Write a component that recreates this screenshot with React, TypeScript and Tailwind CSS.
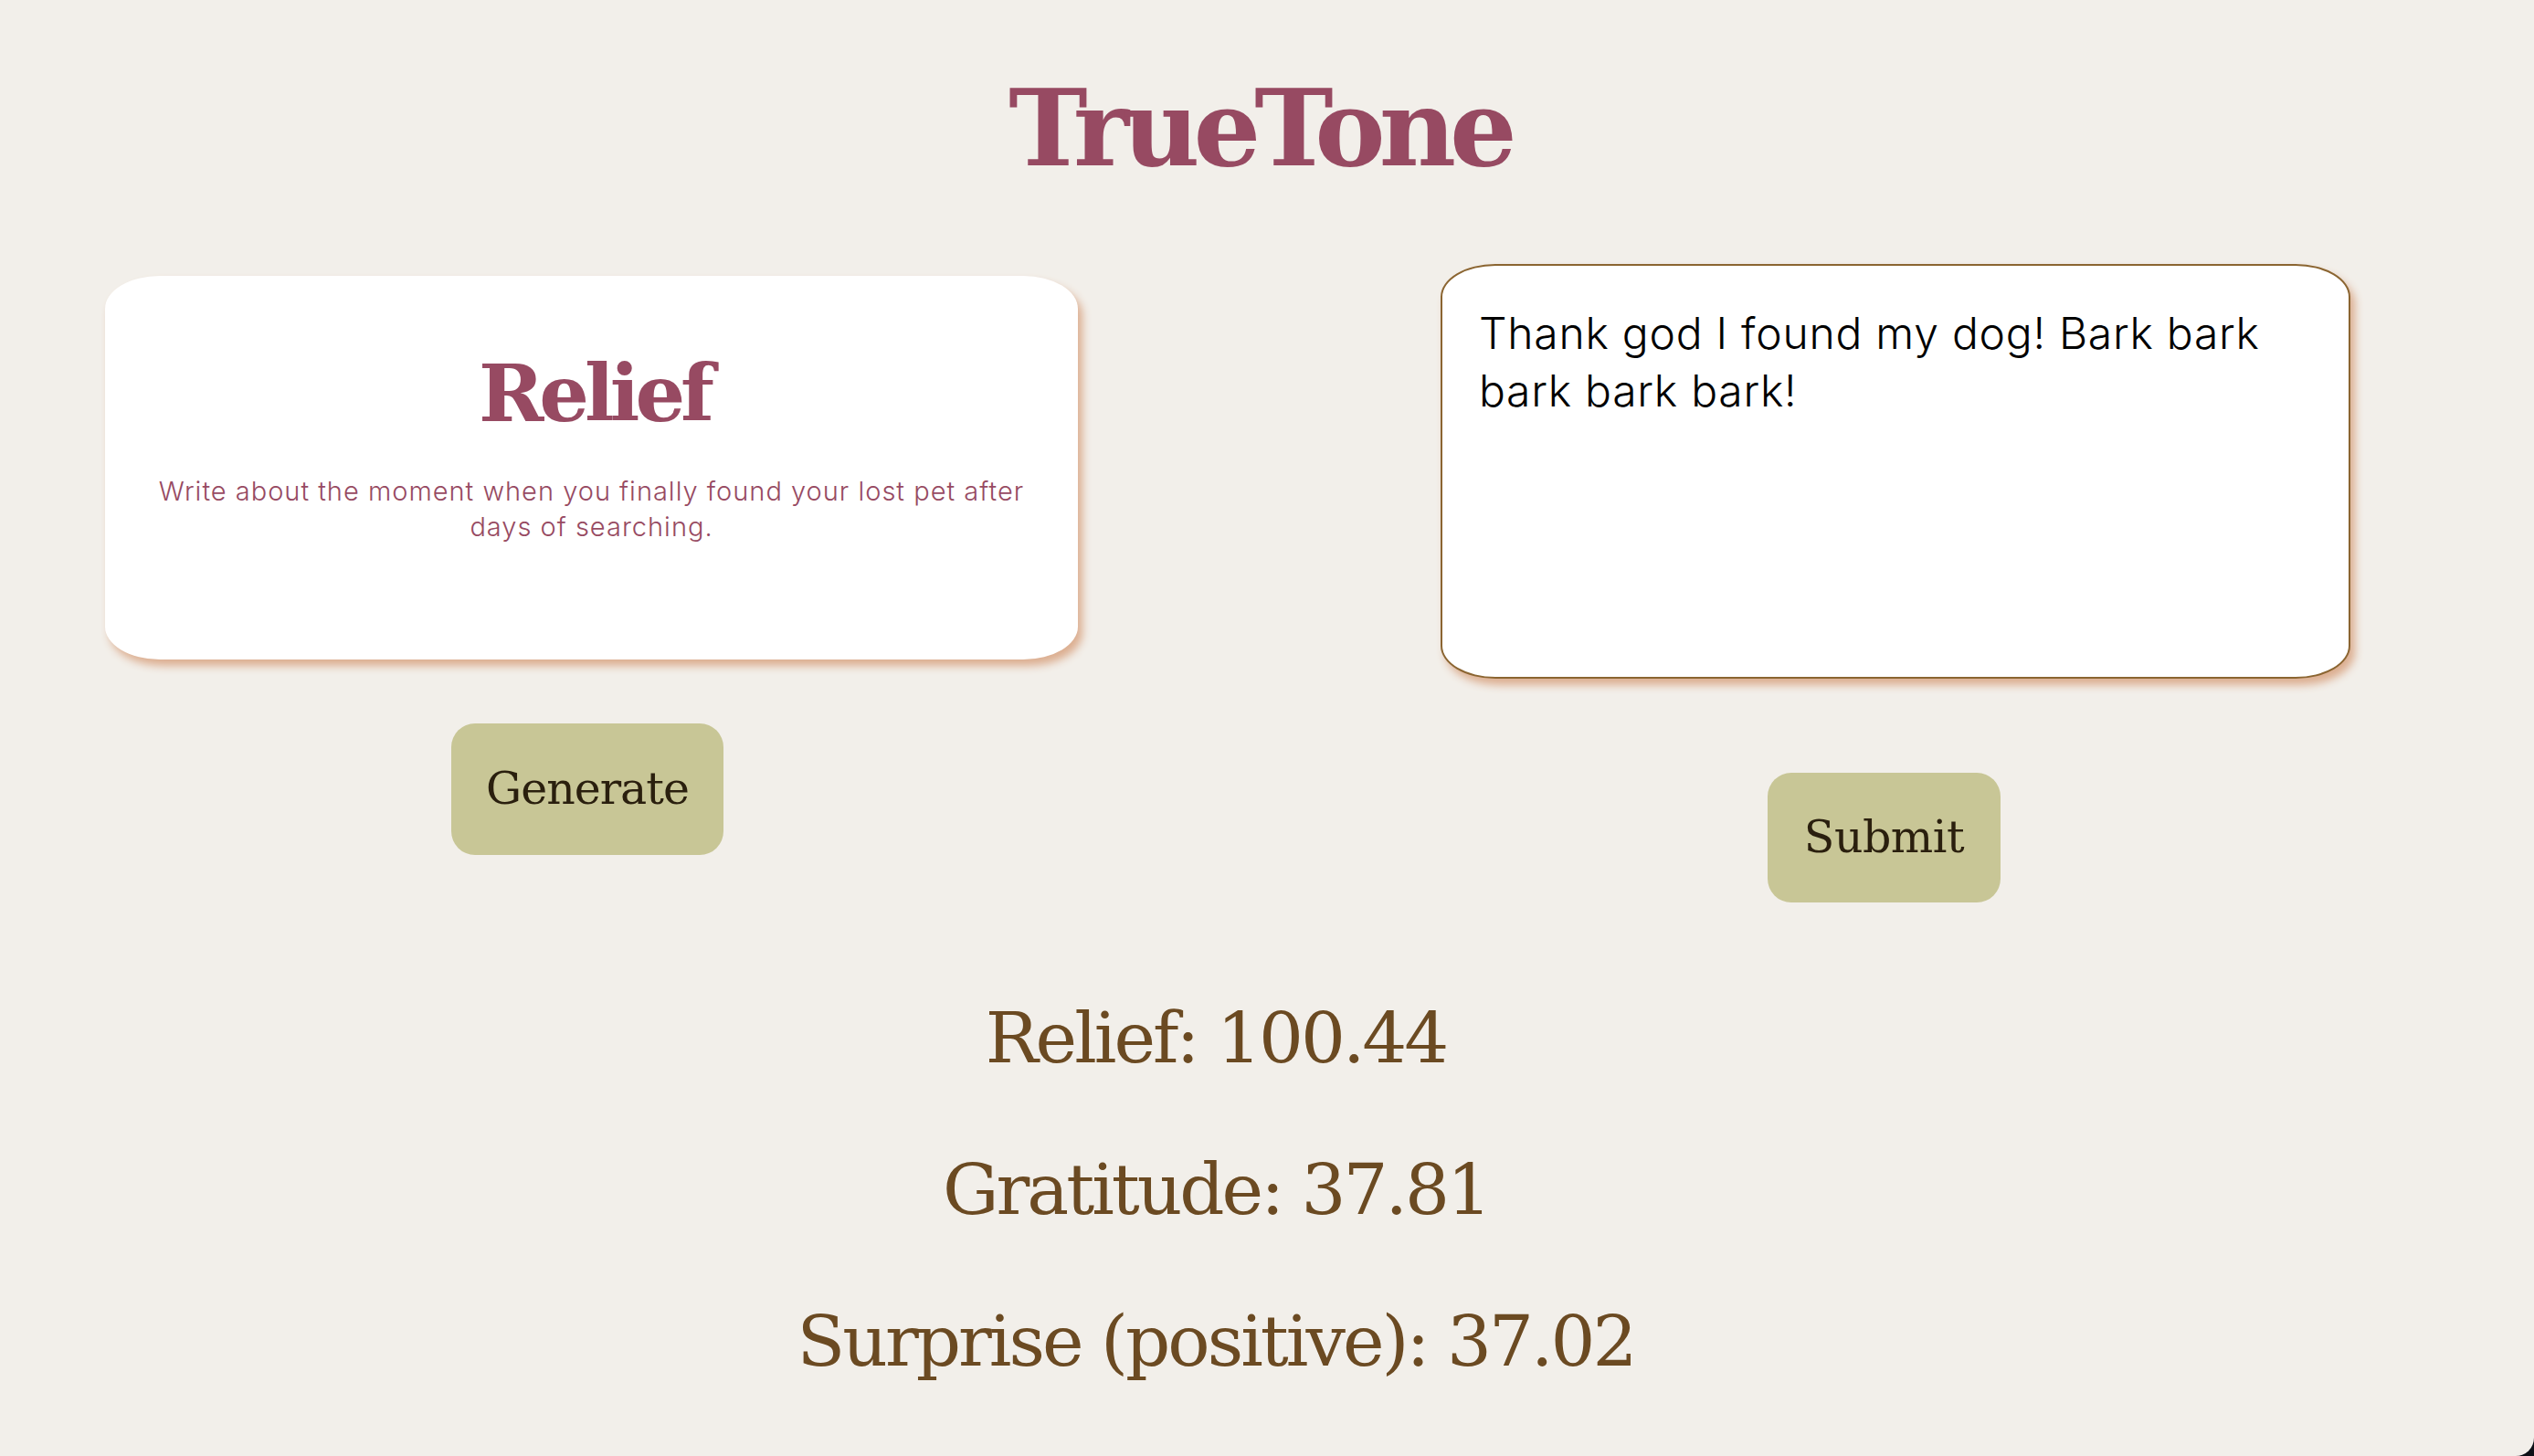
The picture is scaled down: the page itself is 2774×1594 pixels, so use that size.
import { useState } from 'react';

const serif = "font-['DejaVu_Serif',serif]";
const sans = "font-['Inter',sans-serif]";

const results = [
  { label: 'Relief', score: '100.44' },
  { label: 'Gratitude', score: '37.81' },
  { label: 'Surprise (positive)', score: '37.02' },
];

export default function App() {
  const [entry, setEntry] = useState('Thank god I found my dog! Bark bark bark bark bark!');

  return (
    <div className="min-h-screen bg-[#0d1117]">
      <main className="h-[1594px] bg-[#f2efea] rounded-br-[20px] flex flex-col overflow-hidden">
        <h1 className={`${serif} mt-[82px] pr-[16px] text-center text-[116px] leading-none font-bold text-[#974a62] tracking-[-7px]`}>
          TrueTone
        </h1>

        {/* Prompt + entry */}
        <div className="mt-[91px] flex pl-[115px] gap-[397px]">
          <div className="pt-[13px] flex flex-col w-[1065px]">
            <div className="h-[420px] bg-white rounded-[60px/36px] shadow-[5px_7px_10px_#dcae90] pt-[86px] px-[40px] text-center">
              <h2 className={`${serif} pl-[6px] text-[86px] leading-none font-bold text-[#974a62] tracking-[-5px]`}>Relief</h2>
              <p className={`${sans} mt-[44px] text-[29px] leading-[39px] font-light text-[#974a62] tracking-[1px]`}>
                Write about the moment when you finally found your lost pet after days of searching.
              </p>
            </div>
            <button className={`${serif} mt-[70px] ml-[379px] w-[298px] h-[144px] rounded-[26px] bg-[#c8c696] text-[49px] text-[#2a1f0e] tracking-[-1px]`}>
              Generate
            </button>
          </div>

          <div className="flex flex-col w-[996px]">
            <textarea
              value={entry}
              onChange={(e) => setEntry(e.target.value)}
              className={`${sans} h-[454px] w-full resize-none bg-white border-2 border-[#8b6531] rounded-[60px/36px] shadow-[5px_7px_10px_#dcae90] pt-[42px] px-[40px] text-[48px] leading-[63px] font-light text-black tracking-[0.75px] outline-none`}
            />
            <button className={`${serif} mt-[103px] ml-[358px] w-[255px] h-[142px] rounded-[26px] bg-[#c8c696] text-[49px] text-[#2a1f0e] tracking-[-0.5px]`}>
              Submit
            </button>
          </div>
        </div>

        {/* Scores */}
        <div className="mt-[66px] pr-[112px] text-center">
          {results.map((r) => (
            <p key={r.label} className={`${serif} text-[77px] leading-[166px] text-[#6b4a22] tracking-[-3px]`}>
              {r.label}: {r.score}
            </p>
          ))}
        </div>
      </main>
    </div>
  );
}
